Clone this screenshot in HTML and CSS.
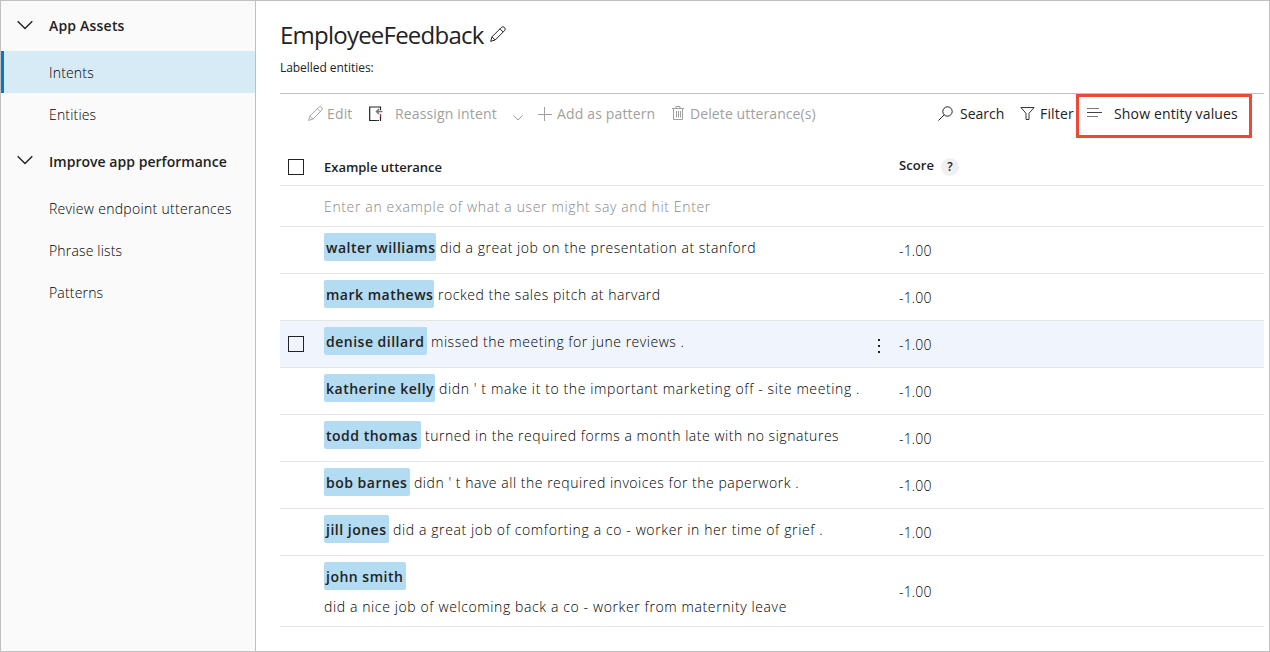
FILE: index.html
```html
<!DOCTYPE html>
<html lang="en">
<head>
<meta charset="utf-8">
<title>EmployeeFeedback</title>
<link rel="stylesheet" href="styles.css">
</head>
<body>
<div class="app">
  <nav class="sidebar">
    <div class="group"><svg class="chevron" viewBox="0 0 16 10"><path d="M.7 1.200 8 8.500 15.300 1.200"/></svg><span class="label-assets">App Assets</span></div>
    <a class="item active">Intents</a>
    <a class="item">Entities</a>
    <div class="group second"><svg class="chevron" viewBox="0 0 16 10"><path d="M.7 1.200 8 8.500 15.300 1.200"/></svg><span class="label-improve">Improve app performance</span></div>
    <a class="item review">Review endpoint utterances</a>
    <a class="item">Phrase lists</a>
    <a class="item">Patterns</a>
  </nav>
  <main class="main">
    <div class="title"><h1>EmployeeFeedback</h1>
      <svg class="pencil" viewBox="0 0 16 16"><path d="M.7 15.300 2 10.800 11.300 1.500a1.900 1.900 0 0 1 3.200 3.200L5.200 14ZM10 2.800 13.200 6M2 10.800 5.200 14"/></svg></div>
    <div class="labelled">Labelled entities:</div>
    <div class="toolbar">
      <div class="tool edit"><svg class="pencil" viewBox="0 0 16 16"><path d="M.7 15.300 2 10.800 11.300 1.500a1.900 1.900 0 0 1 3.200 3.200L5.200 14ZM10 2.800 13.200 6M2 10.800 5.200 14"/></svg><span>Edit</span></div>
      <div class="tool reassign"><svg class="reassign-icon" viewBox="0 0 14 16"><path class="dark" d="M11.500 4V1H.7V14.500H8.500"/><path class="grey" d="M13.500 5.500H7.500M10 3 7.500 5.500 10 8"/><path class="red" d="M11.500 8V11"/><path class="dark" d="M11.500 11V15M8.500 14.500H10"/></svg><span>Reassign intent</span><svg class="drop" viewBox="0 0 10 6"><path d="M.5.5 5 5 9.500.5"/></svg></div>
      <div class="tool add"><svg class="plus" viewBox="0 0 14 14"><path d="M6.500 0V14M0 7.500H14"/></svg><span>Add as pattern</span></div>
      <div class="tool delete"><svg class="trash" viewBox="0 0 12 14"><path d="M0 2.500H12M4 2V.5H8V2M1.500 3V13.500H10.500V3M4.500 5V11.500M6.500 5V11.500M8.500 5V11.500"/></svg><span>Delete utterance(s)</span></div>
      <div class="tool search"><svg class="magnify" viewBox="0 0 15 15"><circle cx="9.500" cy="5.500" r="4.700"/><path d="M6.200 8.800.5 14.500"/></svg><span>Search</span></div>
      <div class="tool filter"><svg class="funnel" viewBox="0 0 15 13"><path d="M.9.5H14.100L9 6.300V12.500H6V6.300Z"/></svg><span>Filter</span></div>
      <div class="tool show"><svg class="lines" viewBox="0 0 15 10"><path class="faint" d="M0 .5H12M0 8.500H11"/><path d="M0 4.500H15"/></svg><span>Show entity values</span></div>
    </div>
    <div class="row head"><i class="box"></i><div class="cell"><span>Example utterance</span></div><div class="score"><span>Score</span><span class="help">?</span></div></div>
    <div class="row enter"><div class="cell"><span>Enter an example of what a user might say and hit Enter</span></div></div>
    <div class="row"><div class="cell"><b class="walter">walter williams</b><span>did a great job on the presentation at stanford</span></div><div class="score">-1.00</div></div>
    <div class="row"><div class="cell"><b class="mark">mark mathews</b><span>rocked the sales pitch at harvard</span></div><div class="score">-1.00</div></div>
    <div class="row hover"><i class="box"></i><div class="cell"><b class="denise">denise dillard</b><span>missed the meeting for june reviews .</span><svg class="more" viewBox="0 0 2 14"><path d="M0 0h2v2H0zM0 6h2v2H0zM0 12h2v2H0z"/></svg></div><div class="score">-1.00</div></div>
    <div class="row"><div class="cell wide"><b class="katherine">katherine kelly</b><span>didn ' t make it to the important marketing off - site meeting .</span></div><div class="score">-1.00</div></div>
    <div class="row"><div class="cell"><b class="todd">todd thomas</b><span>turned in the required forms a month late with no signatures</span></div><div class="score">-1.00</div></div>
    <div class="row"><div class="cell"><b class="bob">bob barnes</b><span>didn ' t have all the required invoices for the paperwork .</span></div><div class="score">-1.00</div></div>
    <div class="row"><div class="cell wide"><b class="jill">jill jones</b><span>did a great job of comforting a co - worker in her time of grief .</span></div><div class="score">-1.00</div></div>
    <div class="row tall"><div class="cell wide"><b class="john">john smith</b><span>did a nice job of welcoming back a co - worker from maternity leave</span></div><div class="score">-1.00</div></div>
  </main>
</div>
</body>
</html>
```
FILE: styles.css
```css
* { box-sizing: border-box; }
body { margin: 0; font-family: "Open Sans", "Noto Sans", sans-serif; font-size: 14px; color: #222; }
svg { fill: none; stroke: currentColor; flex: none; }

.app { display: flex; width: 1270px; height: 652px; border: 1px solid #c0c0c0; }

/* Sidebar */
.sidebar { width: 255px; background: #fafafa; border-right: 1px solid #c0c0c0; }
.group { display: flex; align-items: center; height: 50px; padding-left: 16px; font-weight: 550; }
.group.second { height: 52px; }
.label-assets { letter-spacing: .2px; margin-top: -1px; }
.label-improve { letter-spacing: .03px; }
.chevron { width: 16px; height: 10px; margin: -2px 16px 0 0; stroke-width: 1.4; }
.item { display: flex; align-items: center; height: 42px; padding-left: 48px; font-weight: 350; letter-spacing: .17px; color: #000; }
.item.review { letter-spacing: .3px; }
.item.active { background: #d7ebf6; border-left: 3px solid #0078d4; padding-left: 45px; }

/* Heading */
.main { flex: 1; padding: 0 5px 0 24px; }
.title { display: flex; height: 60px; align-items: center; padding-top: 8px; gap: 6px; }
h1 { margin: 0; font-size: 24px; font-weight: 450; letter-spacing: -.77px; line-height: 32px; }
.pencil { width: 16px; height: 16px; }
.title .pencil { margin-top: -3px; }
.labelled { height: 32px; font-size: 12px; line-height: 14px; letter-spacing: -.05px; }

/* Command bar */
.toolbar { display: flex; border-top: 1px solid #c0c0c0; height: 56px; letter-spacing: .15px; }
.tool { display: flex; align-items: center; height: 40px; color: #a19f9d; white-space: nowrap; }
.tool span { margin-top: -1px; }
.edit { margin-left: 28px; width: 60px; }
.edit .pencil { width: 15px; height: 15px; margin: -1px 4px 0 0; }
.reassign { width: 169px; padding-right: 14px; }
.reassign-icon { width: 14px; height: 16px; margin: 0 12px 0 1px; stroke-width: 1.2; }
.reassign-icon .dark { stroke: #222; }
.reassign-icon .grey { stroke: #777; stroke-width: 1.5; }
.reassign-icon .red { stroke: #a4262c; }
.drop { width: 10px; height: 6px; margin: 8px 0 0 auto; }
.add { width: 134px; }
.plus { width: 14px; height: 14px; margin: -1px 5px 0 1px; }
.delete { width: 266px; letter-spacing: .1px; }
.trash { width: 12px; height: 14px; margin: -2px 6px 0 1px; }
.search, .filter, .show { color: #222; }
.search { width: 83px; letter-spacing: 0; }
.magnify { width: 15px; height: 15px; margin: -2px 7px 0 1px; }
.filter { width: 56px; }
.funnel { width: 15px; height: 13px; margin: -2px 5px 0 0; stroke-width: .9; }
.show { width: 176px; height: 44px; padding: 0 0 4px 8px; border: 3px solid #f04837; }
.lines { width: 15px; height: 10px; margin: -2px 12px 0 0; stroke: #444; }
.lines .faint { stroke: #777; }

/* Utterance table */
.row { display: flex; height: 47px; border-bottom: 1px solid #e5e5e5; font-weight: 350; color: #000; }
.cell { display: flex; align-items: flex-start; width: 575px; margin-left: 44px; padding-top: 6px; line-height: 30px; letter-spacing: .53px; white-space: pre; }
.cell.wide { letter-spacing: .615px; }
.cell b { height: 28px; margin-right: 4px; padding-left: 2px; border-radius: 2px; background: #b3dbf2; color: #222; font-weight: 570; letter-spacing: .5px; }
.box { width: 16px; height: 16px; border: 1px solid #222; margin: 15px 20px 0 8px; }
.box + .cell { margin-left: 0; }
.score { line-height: 48px; letter-spacing: .15px; }
.head { height: 37px; font-size: 13px; font-weight: 600; color: #222; }
.head .box { margin-top: 10px; }
.head .cell { padding-top: 3px; letter-spacing: -.02px; }
.head .score { display: flex; align-items: center; height: 32px; line-height: 18px; letter-spacing: .08px; }
.help { width: 18px; height: 18px; margin: 3px 0 0 7px; border-radius: 50%; background: #f0f0f0; text-align: center; font-size: 12px; }
.enter { height: 41px; color: #888; }
.enter .cell { letter-spacing: .645px; }
.hover { background: #f0f5fd; }
.more { width: 2px; height: 14px; fill: #222; stroke: none; margin: 12px 19px 0 auto; }
.tall { height: 71px; }
.tall .cell { flex-direction: column; }
.tall .cell span { line-height: 34px; }
.tall .score { line-height: 72px; }
.walter { width: 112px; }
.mark { width: 110px; }
.denise { width: 103px; }
.katherine { width: 111px; }
.todd { width: 97px; }
.bob { width: 86px; }
.jill { width: 65px; }
.john { width: 82px; }
```
